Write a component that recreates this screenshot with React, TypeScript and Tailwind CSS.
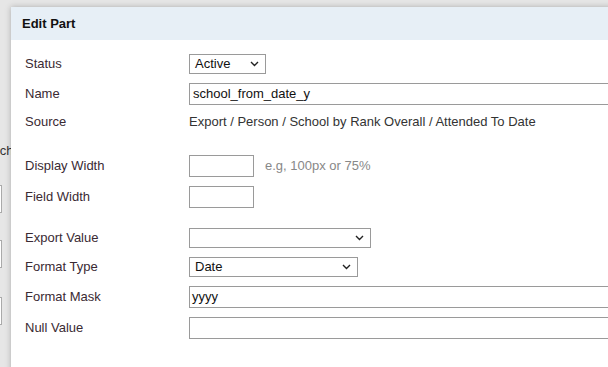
import React from 'react';

const Chevron: React.FC = () => (
  <svg width="9" height="6" viewBox="0 0 9 6" className="shrink-0">
    <path d="M1 1 L4.5 4.5 L8 1" fill="none" stroke="#222" strokeWidth="1.4" />
  </svg>
);

const Select: React.FC<{ value?: string; width: string }> = ({ value, width }) => (
  <div className={`${width} h-[20px] border border-[#9a9a9a] bg-white flex items-center justify-between pl-[5px] pr-[6px] text-[#111]`}>
    <span>{value}</span>
    <Chevron />
  </div>
);

const Row: React.FC<{ label: string; h: string; children?: React.ReactNode }> = ({ label, h, children }) => (
  <div className={`flex items-center ${h}`}>
    <div className="w-[164px] shrink-0 text-[#3a2a33]">{label}</div>
    <div className="flex items-center flex-1">{children}</div>
  </div>
);

const App: React.FC = () => {
  return (
    <div
      className="relative w-[608px] h-[367px] overflow-hidden bg-[#e6e6e6] text-[13px]"
      style={{ fontFamily: '"Liberation Sans", Arial, sans-serif' }}
    >
      {/* page behind the dialog */}
      <div className="absolute left-[-9px] top-[141px] text-[#333]">Sche</div>
      <div className="absolute left-[-20px] top-[185px] w-[22px] h-[28px] border border-[#aaa] bg-white" />
      <div className="absolute left-[-20px] top-[240px] w-[22px] h-[28px] border border-[#aaa] bg-white" />
      <div className="absolute left-[-20px] top-[297px] w-[22px] h-[28px] border border-[#aaa] bg-white" />

      {/* dialog */}
      <div className="absolute left-[11px] top-[7px] w-[640px] h-[400px] bg-white shadow-[0_0_6px_rgba(0,0,0,0.25)]">
        <div className="h-[33px] bg-[#e7eff6] flex items-center pl-[11px] font-bold text-[#111]">Edit Part</div>
        <div className="pl-[14px] pt-[9px]">
          <Row label="Status" h="h-[30px]">
            <Select value="Active" width="w-[77px]" />
          </Row>
          <Row label="Name" h="h-[30px]">
            <div className="w-full h-[22px] border border-[#9a9a9a] flex items-center pl-[3px] text-[#111]">school_from_date_y</div>
          </Row>
          <Row label="Source" h="h-[26px]">
            <span className="text-[#333]">Export / Person / School by Rank Overall / Attended To Date</span>
          </Row>
          <div className="h-[16px]" />
          <Row label="Display Width" h="h-[30px]">
            <div className="w-[65px] h-[22px] border border-[#9a9a9a]" />
            <span className="ml-[11px] text-[#888]">e.g, 100px or 75%</span>
          </Row>
          <Row label="Field Width" h="h-[32px]">
            <div className="w-[65px] h-[22px] border border-[#9a9a9a]" />
          </Row>
          <div className="h-[10px]" />
          <Row label="Export Value" h="h-[30px]">
            <Select width="w-[182px]" />
          </Row>
          <Row label="Format Type" h="h-[28px]">
            <Select value="Date" width="w-[169px]" />
          </Row>
          <Row label="Format Mask" h="h-[32px]">
            <div className="w-full h-[22px] border border-[#9a9a9a] flex items-center pl-[2px] text-[#111]">yyyy</div>
          </Row>
          <Row label="Null Value" h="h-[30px]">
            <div className="w-full h-[22px] border border-[#9a9a9a]" />
          </Row>
        </div>
      </div>
    </div>
  );
};

export default App;
